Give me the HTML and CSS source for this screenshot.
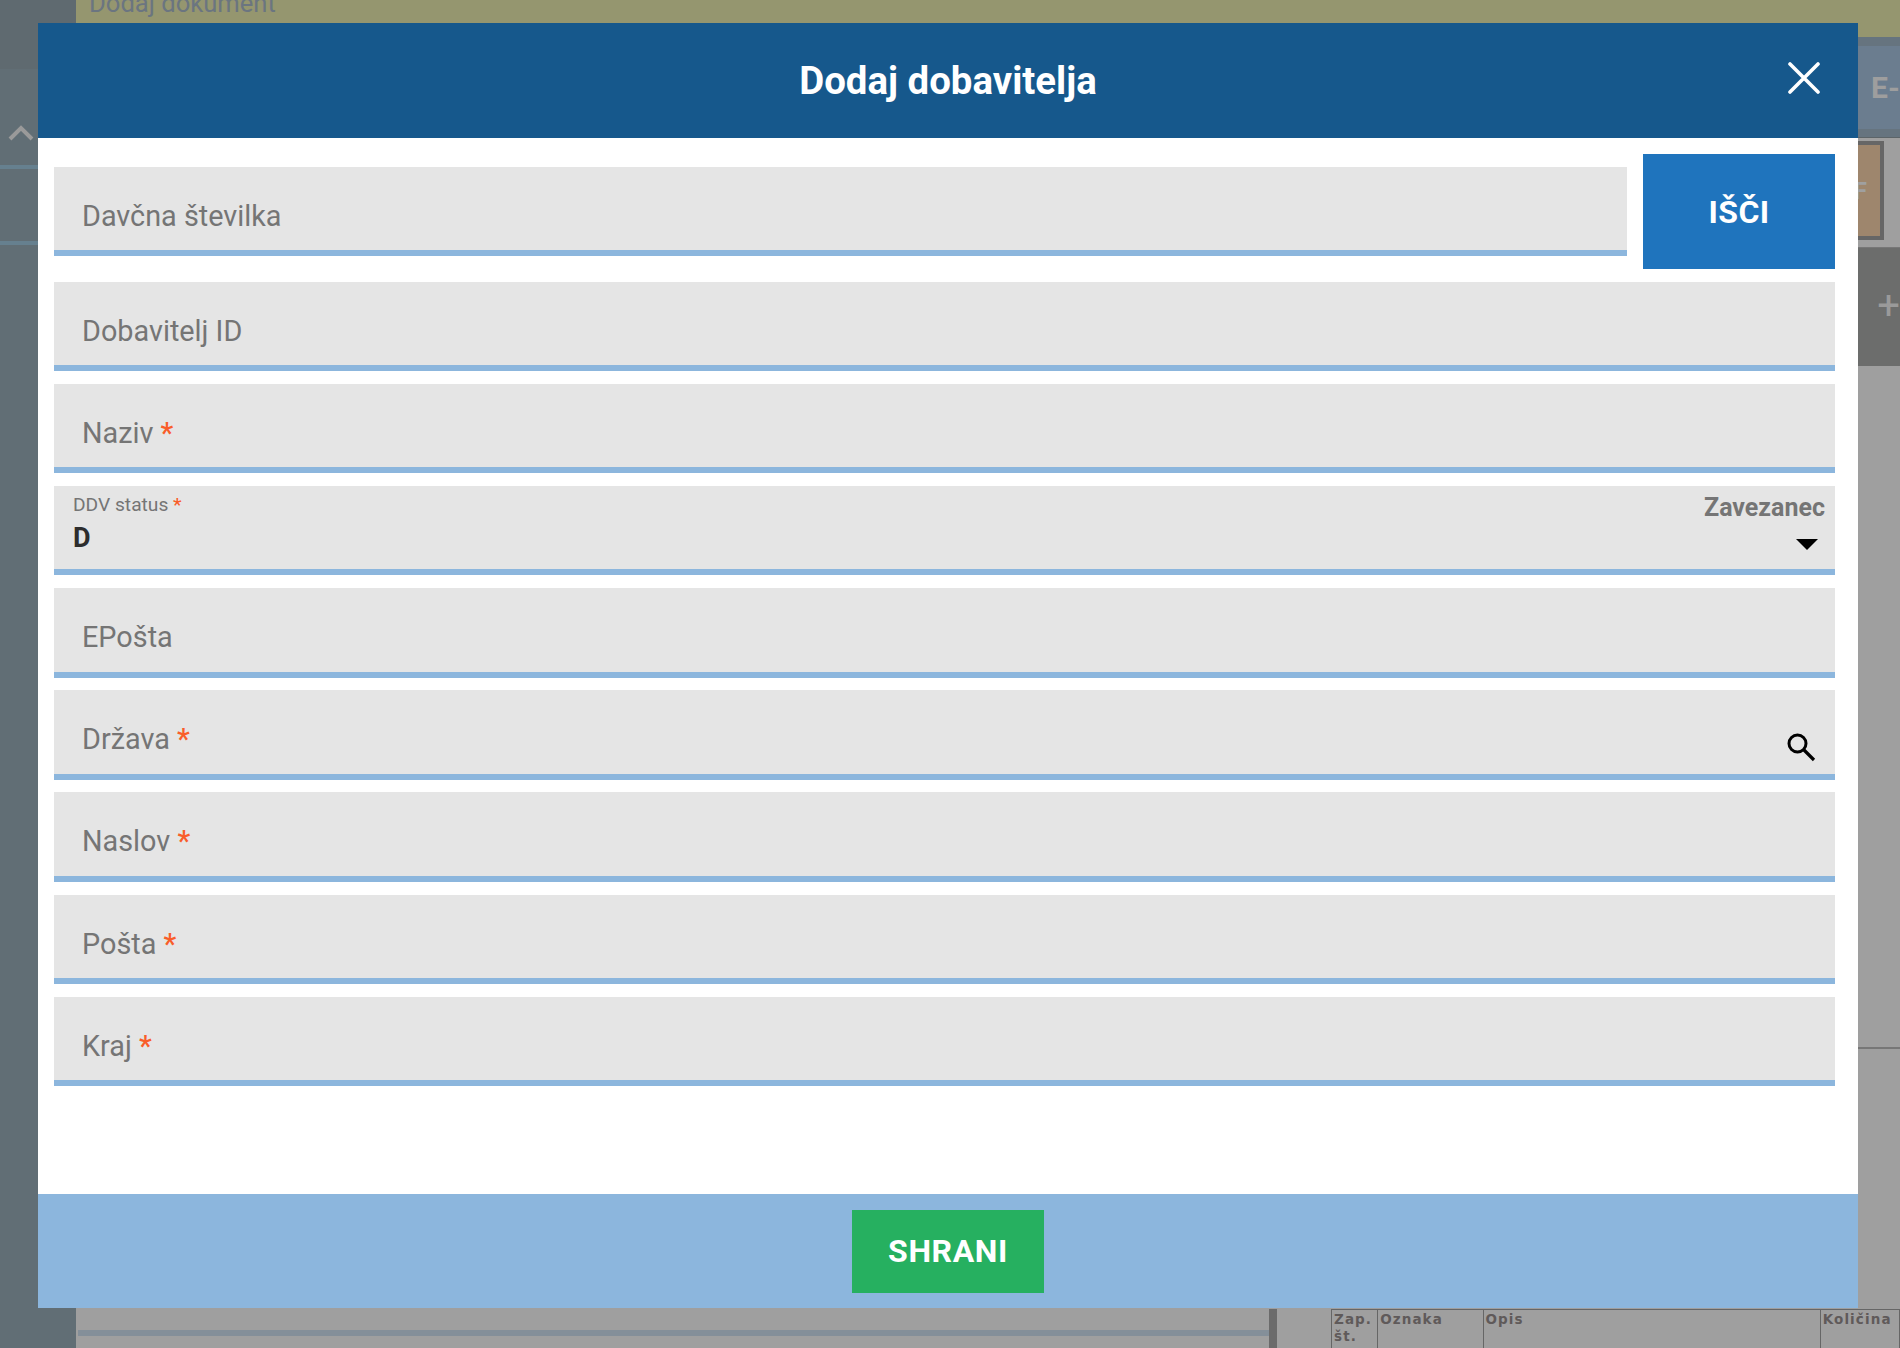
FILE: index.html
```html
<!DOCTYPE html>
<html lang="sl">
<head>
    <meta charset="UTF-8">
    <title>Dodaj dobavitelja</title>
    <link rel="stylesheet" href="styles.css">
</head>
<body>

<div class="page">
    <aside class="sidebar">
        <div class="side-top"></div>
        <svg class="chevron" width="26" height="16" viewBox="0 0 26 16"><path d="M2 14L13 3l11 11" fill="none" stroke="#9a9a9a" stroke-width="4"/></svg>
        <div class="side-line first"></div>
        <div class="side-line"></div>
    </aside>
    <main class="main">
        <div class="topbar"><span>Dodaj dokument</span></div>
        <div class="tabs"><span class="tab">E-</span></div>
        <div class="doc-row"><div class="doc-box"><span>F</span></div></div>
        <div class="add-row"><span>+</span></div>
        <div class="filler"></div>
        <div class="bottom">
            <div class="bottom-left"><div class="scroll-bar"></div></div>
            <div class="bottom-divider"></div>
            <table class="items">
                <tr>
                    <th class="col-nr">Zap. št.</th>
                    <th class="col-code">Oznaka</th>
                    <th class="col-desc">Opis</th>
                    <th class="col-qty">Količina</th>
                </tr>
            </table>
        </div>
    </main>
</div>

<div class="modal">
    <header class="modal-head">
        <h1>Dodaj dobavitelja</h1>
        <svg class="close" width="32" height="32" viewBox="0 0 32 32"><path d="M2 2l28 28M30 2L2 30" stroke="#fff" stroke-width="3.6" stroke-linecap="round"/></svg>
    </header>
    <form class="modal-body">
        <div class="tax-row">
            <div class="field"><span class="label">Davčna številka</span></div>
            <button type="button" class="btn-search">IŠČI</button>
        </div>
        <div class="field"><span class="label">Dobavitelj ID</span></div>
        <div class="field"><span class="label">Naziv <em>*</em></span></div>
        <div class="field select">
            <div class="select-left">
                <span class="small-label">DDV status <em>*</em></span>
                <strong class="select-value">D</strong>
            </div>
            <div class="select-right">
                <span class="select-text">Zavezanec</span>
                <span class="arrow"></span>
            </div>
        </div>
        <div class="field"><span class="label">EPošta</span></div>
        <div class="field has-icon">
            <span class="label">Država <em>*</em></span>
            <svg class="search" width="30" height="30" viewBox="0 0 30 30"><circle cx="11.5" cy="11.5" r="8.5" fill="none" stroke="#000" stroke-width="3"/><path d="M17.5 17.5L28 28" stroke="#000" stroke-width="3.2"/></svg>
        </div>
        <div class="field"><span class="label">Naslov <em>*</em></span></div>
        <div class="field"><span class="label">Pošta <em>*</em></span></div>
        <div class="field"><span class="label">Kraj <em>*</em></span></div>
    </form>
    <footer class="modal-foot">
        <button type="button" class="btn-save">SHRANI</button>
    </footer>
</div>

</body>
</html>
```

FILE: styles.css
```css
* {
    box-sizing: border-box;
}

html, body {
    margin: 0;
    height: 100%;
    overflow: hidden;
}

body {
    font-family: Roboto, sans-serif;
    background-color: #9f9f9f;
}

.page {
    display: flex;
    height: 1348px;
}

.sidebar {
    width: 76px;
    flex: none;
    background-color: #616e75;
}

.side-top {
    height: 69px;
    background-color: #5f6a70;
}

.chevron {
    display: block;
    margin: 56px 0 0 8px;
}

.side-line {
    height: 4px;
    background-color: #66808f;
    margin-top: 72px;
}

.side-line.first {
    margin-top: 24px;
}

.main {
    flex: 1;
    display: flex;
    flex-direction: column;
    min-width: 0;
}

.topbar {
    height: 37px;
    flex: none;
    background-color: #95966f;
    color: #6b7580;
    font-size: 25.6px;
    line-height: 26px;
    padding-left: 13px;
    overflow: hidden;
}

.topbar span {
    display: block;
    margin-top: -10px;
}

.tabs {
    height: 101px;
    flex: none;
    display: flex;
    justify-content: flex-end;
    background-color: #66747f;
    border-bottom: 1px solid #5c6468;
    padding: 9px 0 8px;
}

.tab {
    width: 300px;
    background-color: #6b7d8f;
    color: #9e9e9e;
    font-size: 30px;
    font-weight: 700;
    line-height: 84px;
    padding-left: 271px;
    white-space: nowrap;
    overflow: hidden;
}

.doc-row {
    height: 110px;
    flex: none;
    display: flex;
    justify-content: flex-end;
    padding: 3px 16px 0 0;
    border-bottom: 1px solid #777;
}

.doc-box {
    width: 300px;
    height: 99px;
    background-color: #9e866d;
    border: 4px solid #666;
    color: #a0a0a0;
    font-size: 24px;
    font-weight: 700;
    line-height: 92px;
    text-align: right;
    padding-right: 13px;
}

.add-row {
    height: 118px;
    flex: none;
    background-color: #6c6d6c;
    color: #9a9a9a;
    font-size: 40px;
    line-height: 116px;
    text-align: right;
    overflow: hidden;
}

.filler {
    height: 683px;
    flex: none;
    border-bottom: 2px solid #777;
}

.bottom {
    flex: 1;
    display: flex;
    align-items: stretch;
    padding-top: 260px;
}

.bottom-left {
    width: 1193px;
    flex: none;
    padding: 21px 0 0 2px;
}

.scroll-bar {
    height: 6px;
    background-color: #848f99;
}

.bottom-divider {
    width: 8px;
    flex: none;
    background-color: #6b6b6b;
}

.items {
    margin-left: 54px;
    border-collapse: collapse;
    table-layout: fixed;
    width: 569px;
    height: 40px;
}

.items th {
    border: 1px solid #666;
    border-bottom: none;
    padding: 1px 2px;
    color: #5f5a5a;
    font-family: "DejaVu Sans", sans-serif;
    font-size: 13.5px;
    font-weight: 700;
    line-height: 17px;
    letter-spacing: 1.1px;
    text-align: left;
    vertical-align: top;
}

.col-nr { width: 46px; }
.col-code { width: 105px; }
.col-desc { width: 336px; }
.col-qty { width: 79px; }

.modal {
    position: absolute;
    left: 38px;
    top: 23px;
    width: 1820px;
    height: 1285px;
    background-color: #fff;
    display: flex;
    flex-direction: column;
}

.modal-head {
    position: relative;
    height: 115px;
    flex: none;
    background-color: #16588c;
    display: flex;
    align-items: center;
    justify-content: center;
}

.modal-head h1 {
    margin: 0;
    color: #fff;
    font-size: 38.4px;
    font-weight: 700;
}

.close {
    position: absolute;
    right: 38px;
    top: 39px;
}

.modal-body {
    flex: 1;
    display: flex;
    flex-direction: column;
    gap: 12.8px;
    padding: 16.15px 23px 0 16px;
}

.tax-row {
    display: flex;
    align-items: center;
    gap: 16px;
}

.tax-row .field {
    flex: 1;
}

.field {
    height: 89.3px;
    flex: none;
    background-color: #e5e5e5;
    border-bottom: 6px solid #8cb6dd;
    padding: 27px 28px 0;
}

.label {
    color: #757575;
    font-size: 28.8px;
    line-height: 44px;
}

em {
    color: #f95d2a;
    font-style: normal;
    font-weight: 500;
}

.btn-search {
    width: 192px;
    height: 115px;
    flex: none;
    border: none;
    background-color: #1f74bd;
    color: #fff;
    font-family: Roboto, sans-serif;
    font-size: 32px;
    font-weight: 700;
    letter-spacing: 0.4px;
}

.select {
    display: flex;
    justify-content: space-between;
    padding: 6px 10px 0 19px;
}

.select-left,
.select-right {
    display: flex;
    flex-direction: column;
}

.select-right {
    align-items: flex-end;
}

.small-label {
    color: #757575;
    font-size: 19.2px;
    line-height: 26px;
}

.select-value {
    color: #2d2d2d;
    font-size: 27px;
    line-height: 40px;
}

.select-text {
    color: #757575;
    font-size: 25px;
    font-weight: 700;
    line-height: 32px;
}

.arrow {
    width: 0;
    height: 0;
    margin: 15px 7px 0 0;
    border-left: 11px solid transparent;
    border-right: 11px solid transparent;
    border-top: 11px solid #000;
}

.has-icon {
    display: flex;
    justify-content: space-between;
    padding-right: 19px;
}

.search {
    margin-top: 15px;
}

.modal-foot {
    height: 114px;
    flex: none;
    background-color: #8cb6dd;
    display: flex;
    align-items: center;
    justify-content: center;
}

.btn-save {
    width: 192px;
    height: 83px;
    border: none;
    background-color: #26b060;
    color: #fff;
    font-family: Roboto, sans-serif;
    font-size: 32px;
    font-weight: 700;
    letter-spacing: 0.6px;
}
```
